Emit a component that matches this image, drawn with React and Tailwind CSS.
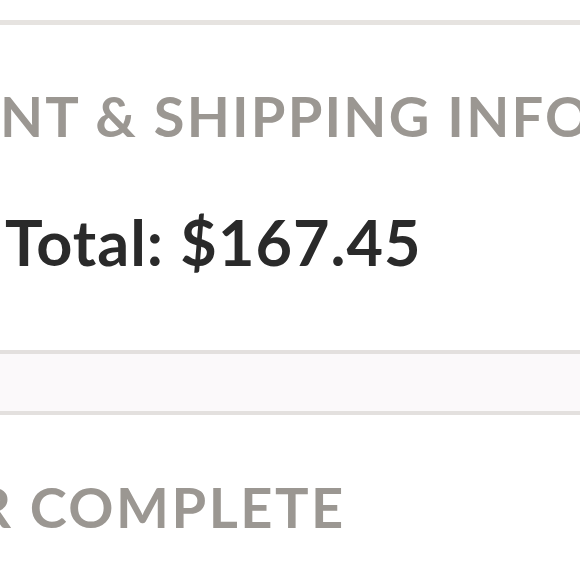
export default function App() {
  return (
    <div className="w-[580px] h-[580px] overflow-hidden bg-white" style={{ fontFamily: "Lato, 'Open Sans', sans-serif" }}>
      <div className="h-[20px]" />
      <div className="h-[5px] bg-[#e6e3e0]" />
      <div className="h-[325px] flex flex-col">
        <div className="mt-[66px] h-[50px] flex items-center whitespace-nowrap overflow-hidden">
          <span className="ml-[-199px] text-[56px] font-bold tracking-[2.2px] text-[#9b9792] leading-none">PAYMENT &amp; SHIPPING INFO</span>
        </div>
        <div className="mt-[70px] h-[60px] flex items-center whitespace-nowrap pl-[5px]">
          <span className="text-[63px] font-bold tracking-[1px] text-[#2a2a2a] leading-none">Total: $167.45</span>
        </div>
      </div>
      <div className="h-[65px] border-y-4 border-[#e3e0de] bg-[#fbf9fa]" />
      <div className="h-[165px] flex flex-col">
        <div className="mt-[67px] h-[50px] flex items-center whitespace-nowrap overflow-hidden">
          <span className="ml-[-191px] text-[56px] font-bold tracking-[2.5px] text-[#9b9792] leading-none">ORDER COMPLETE</span>
        </div>
      </div>
    </div>
  );
}
